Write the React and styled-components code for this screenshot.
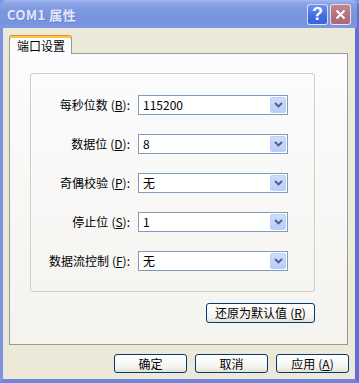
import React from 'react';
import styled, { createGlobalStyle } from 'styled-components';

const GlobalStyle = createGlobalStyle`
  html, body {
    margin: 0;
    padding: 0;
    background: #7a96df;
  }
  body {
    font-family: "Noto Sans CJK SC", "Liberation Sans", sans-serif;
    font-size: 12px;
    color: #000;
  }
`;

const Window = styled.div`
  width: 359px;
  height: 383px;
  display: flex;
  flex-direction: column;
  background: #7a96df;
  border-radius: 7px 7px 0 0;
  overflow: hidden;
`;

const TitleBar = styled.div`
  height: 28px;
  flex: none;
  display: flex;
  align-items: center;
  padding: 0 6px 0 7px;
  box-sizing: border-box;
  background: linear-gradient(#a4b9f0 0%, #8aa3e6 12%, #7b97e0 40%, #7893de 85%, #8099e0 100%);
  border-right: 2px solid #5f70d6;
`;

const Title = styled.div`
  flex: 1;
  color: #e1e9fa;
  font-weight: bold;
  font-size: 13px;
  letter-spacing: 0.5px;
  text-shadow: 1px 1px 0 #6a82cf;
`;

const CaptionButton = styled.div`
  width: 21px;
  height: 21px;
  box-sizing: border-box;
  margin-left: 2px;
  border: 1px solid rgba(255, 255, 255, 0.75);
  border-radius: 3px;
  display: flex;
  align-items: center;
  justify-content: center;
  color: #fff;
  font-family: "Liberation Sans", sans-serif;
  font-weight: bold;
  font-size: 18px;
  background: ${p => (p.$close
    ? 'linear-gradient(#c68593, #b26f7e 60%, #a8687a)'
    : 'linear-gradient(#6d93f2, #3f6be0 60%, #3a63d8)')};
`;

const Body = styled.div`
  flex: 1;
  display: flex;
  flex-direction: column;
  background: #ece9d8;
  border-left: 3px solid #7b93e0;
  border-right: 4px solid #5e6fd6;
  border-bottom: 4px solid #6f85dc;
  padding: 7px 7px 6px 6px;
`;

const Tabs = styled.div`
  display: flex;
  height: 18px;
`;

const Tab = styled.div`
  position: relative;
  z-index: 1;
  width: 63px;
  height: 19px;
  box-sizing: border-box;
  background: #fcfcfe;
  border: 1px solid #919b9c;
  border-top: 1px solid #e68b2c;
  border-bottom: none;
  border-radius: 3px 3px 0 0;
  box-shadow: inset 0 2px 0 #ffc83c;
  padding: 2px 0 0 7px;
  line-height: 15px;
`;

const Panel = styled.div`
  height: 292px;
  box-sizing: border-box;
  border: 1px solid #919b9c;
  background: linear-gradient(#fcfcfe, #f4f3ee);
  padding: 19px 0 0 20px;
  display: flex;
  flex-direction: column;
`;

const Column = styled.div`
  width: 285px;
  display: flex;
  flex-direction: column;
`;

const GroupBox = styled.div`
  height: 219px;
  box-sizing: border-box;
  border: 1px solid #d0d0bf;
  border-radius: 3px;
  padding-top: 21px;
  display: grid;
  grid-template-columns: 102px 150px;
  grid-auto-rows: 20px;
  column-gap: 5px;
  row-gap: 19px;
  align-content: start;
`;

const Label = styled.div`
  text-align: right;
  line-height: 20px;
  white-space: nowrap;
  padding-right: 3px;
`;

const Key = styled.span`
  margin-left: 3px;
`;

const Combo = styled.div`
  box-sizing: border-box;
  border: 1px solid #7f9db9;
  background: #fff;
  display: flex;
  align-items: center;
  padding: 1px;
`;

const ComboText = styled.div`
  flex: 1;
  padding-left: 3px;
  line-height: 16px;
`;

const DropButton = styled.div`
  width: 16px;
  height: 16px;
  box-sizing: border-box;
  border-radius: 2px;
  background: linear-gradient(#cfdcfd, #b9cdfa);
  border: 1px solid #bccdf6;
  display: flex;
  align-items: center;
  justify-content: center;
`;

const XpButton = styled.div`
  width: ${p => p.$w || 73}px;
  height: ${p => p.$h || 19}px;
  box-sizing: border-box;
  border: 1px solid #003c74;
  border-radius: 3px;
  background: linear-gradient(#ffffff, #f4f4f0 70%, #e3e0d6);
  display: flex;
  align-items: center;
  justify-content: center;
  white-space: nowrap;
  line-height: 1;
`;

const RestoreRow = styled.div`
  display: flex;
  justify-content: flex-end;
  margin-top: 11px;
`;

const Footer = styled.div`
  display: flex;
  justify-content: flex-end;
  gap: 8px;
  margin: 9px -1px 0 0;
`;

const Arrow = () => (
  <svg width="9" height="6" viewBox="0 0 9 6">
    <path d="M1 1 L4.5 4.4 L8 1" fill="none" stroke="#4d6185" strokeWidth="2" />
  </svg>
);

const rows = [
  { label: '每秒位数', key: 'B', value: '115200' },
  { label: '数据位', key: 'D', value: '8' },
  { label: '奇偶校验', key: 'P', value: '无' },
  { label: '停止位', key: 'S', value: '1' },
  { label: '数据流控制', key: 'F', value: '无' },
];

export default function App() {
  return (
    <>
      <GlobalStyle />
      <Window>
        <TitleBar>
          <Title>COM1 属性</Title>
          <CaptionButton>?</CaptionButton>
          <CaptionButton $close>
            <svg width="11" height="11" viewBox="0 0 11 11">
              <path d="M1.5 1.5 L9.5 9.5 M9.5 1.5 L1.5 9.5" stroke="#fff" strokeWidth="2" />
            </svg>
          </CaptionButton>
        </TitleBar>
        <Body>
          <Tabs>
            <Tab>端口设置</Tab>
          </Tabs>
          <Panel>
            <Column>
              <GroupBox>
                {rows.map(r => (
                  <React.Fragment key={r.key}>
                    <Label>
                      {r.label}
                      <Key>
                        (<u>{r.key}</u>):
                      </Key>
                    </Label>
                    <Combo>
                      <ComboText>{r.value}</ComboText>
                      <DropButton>
                        <Arrow />
                      </DropButton>
                    </Combo>
                  </React.Fragment>
                ))}
              </GroupBox>
              <RestoreRow>
                <XpButton $w={109} $h={20}>
                  还原为默认值<Key>(<u>R</u>)</Key>
                </XpButton>
              </RestoreRow>
            </Column>
          </Panel>
          <Footer>
            <XpButton>确定</XpButton>
            <XpButton>取消</XpButton>
            <XpButton>
              应用<Key>(<u>A</u>)</Key>
            </XpButton>
          </Footer>
        </Body>
      </Window>
    </>
  );
}
